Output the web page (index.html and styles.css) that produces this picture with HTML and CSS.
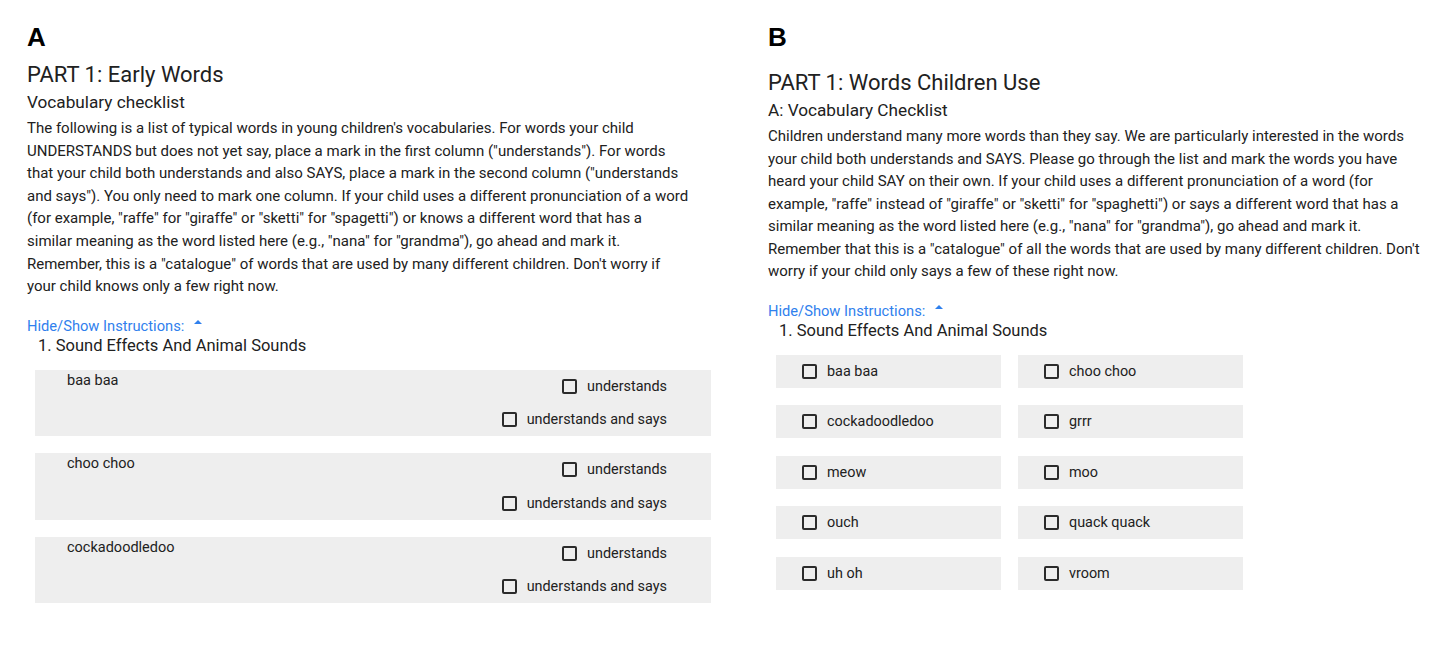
FILE: index.html
```html
<!DOCTYPE html>
<html>
<head>
<meta charset="utf-8">
<link rel="stylesheet" href="styles.css">
</head>
<body>
<div class="page">
  <section class="panel panel-a">
    <div class="letter">A</div>
    <h1 class="title">PART 1: Early Words</h1>
    <h2 class="subtitle">Vocabulary checklist</h2>
    <p class="instructions">The following is a list of typical words in young children's vocabularies. For words your child UNDERSTANDS but does not yet say, place a mark in the first column ("understands"). For words that your child both understands and also SAYS, place a mark in the second column ("understands and says"). You only need to mark one column. If your child uses a different pronunciation of a word (for example, "raffe" for "giraffe" or "sketti" for "spagetti") or knows a different word that has a similar meaning as the word listed here (e.g., "nana" for "grandma"), go ahead and mark it. Remember, this is a "catalogue" of words that are used by many different children. Don't worry if your child knows only a few right now.</p>
    <div class="toggle toggle-a">Hide/Show Instructions: <svg class="caret" width="12" height="8" viewBox="0 0 12 8"><path d="M2 6 L6 2 L10 6 Z" fill="currentColor"/></svg></div>
    <div class="section-title">1. Sound Effects And Animal Sounds</div>
    <div class="rows">
      <div class="row">
        <div class="word">baa baa</div>
        <div class="opts">
          <label class="opt"><span class="box"></span>understands</label>
          <label class="opt"><span class="box"></span>understands and says</label>
        </div>
      </div>
      <div class="row">
        <div class="word">choo choo</div>
        <div class="opts">
          <label class="opt"><span class="box"></span>understands</label>
          <label class="opt"><span class="box"></span>understands and says</label>
        </div>
      </div>
      <div class="row">
        <div class="word">cockadoodledoo</div>
        <div class="opts">
          <label class="opt"><span class="box"></span>understands</label>
          <label class="opt"><span class="box"></span>understands and says</label>
        </div>
      </div>
    </div>
  </section>
  <section class="panel panel-b">
    <div class="letter">B</div>
    <h1 class="title title-b">PART 1: Words Children Use</h1>
    <h2 class="subtitle">A: Vocabulary Checklist</h2>
    <p class="instructions instructions-b">Children understand many more words than they say. We are particularly interested in the words your child both understands and SAYS. Please go through the list and mark the words you have heard your child SAY on their own. If your child uses a different pronunciation of a word (for example, "raffe" instead of "giraffe" or "sketti" for "spaghetti") or says a different word that has a similar meaning as the word listed here (e.g., "nana" for "grandma"), go ahead and mark it. Remember that this is a "catalogue" of all the words that are used by many different children. Don't worry if your child only says a few of these right now.</p>
    <div class="toggle toggle-b">Hide/Show Instructions: <svg class="caret" width="12" height="8" viewBox="0 0 12 8"><path d="M2 6 L6 2 L10 6 Z" fill="currentColor"/></svg></div>
    <div class="section-title">1. Sound Effects And Animal Sounds</div>
    <div class="grid">
      <label class="cell"><span class="box"></span>baa baa</label>
      <label class="cell"><span class="box"></span>choo choo</label>
      <label class="cell"><span class="box"></span>cockadoodledoo</label>
      <label class="cell"><span class="box"></span>grrr</label>
      <label class="cell"><span class="box"></span>meow</label>
      <label class="cell"><span class="box"></span>moo</label>
      <label class="cell"><span class="box"></span>ouch</label>
      <label class="cell"><span class="box"></span>quack quack</label>
      <label class="cell"><span class="box"></span>uh oh</label>
      <label class="cell"><span class="box"></span>vroom</label>
    </div>
  </section>
</div>
</body>
</html>
```

FILE: styles.css
```css
html, body {
  margin: 0;
  padding: 0;
  background: #ffffff;
}
body {
  font-family: Roboto, "Noto Sans", Arial, sans-serif;
  color: #212121;
}
.page {
  display: flex;
  align-items: flex-start;
}
.panel-a {
  width: 684px;
  margin-left: 27px;
  padding-top: 22px;
}
.panel-b {
  width: 660px;
  margin-left: 57px;
  padding-top: 22px;
}
.letter {
  font-family: "Liberation Sans", Arial, sans-serif;
  font-weight: bold;
  font-size: 26px;
  line-height: 30px;
  color: #000;
}
.title {
  margin: 8px 0 0 0;
  font-size: 22px;
  font-weight: 400;
  line-height: 30px;
}
.title-b {
  margin-top: 16px;
}
.subtitle {
  margin: 0;
  font-size: 17.2px;
  font-weight: 400;
  line-height: 25px;
}
.instructions {
  margin: 0;
  padding-top: 2px;
  font-size: 15px;
  line-height: 22.6px;
  width: 663px;
}
.instructions-b {
  width: 660px;
  line-height: 22.5px;
  padding-top: 2px;
}
.toggle {
  color: #2f80ed;
  font-size: 14.7px;
  line-height: 20px;
  display: flex;
  align-items: center;
}
.toggle-a {
  margin-top: 18px;
}
.toggle-b {
  margin-top: 18px;
}
.caret {
  margin-left: 8px;
  margin-top: -7px;
}
.section-title {
  font-size: 16.5px;
  line-height: 20px;
  padding-left: 11px;
}
.rows {
  margin-top: 14px;
  margin-left: 8px;
  display: flex;
  flex-direction: column;
  gap: 17px;
}
.row {
  background: #eeeeee;
  height: 66.5px;
  display: flex;
  justify-content: space-between;
  align-items: flex-start;
  padding: 0 44px 0 32px;
}
.word {
  font-size: 14.5px;
  line-height: 18px;
  padding-top: 2px;
}
.opts {
  display: flex;
  flex-direction: column;
  align-items: flex-end;
}
.opt {
  display: flex;
  align-items: center;
  height: 33.3px;
  font-size: 14.4px;
}
.box {
  display: inline-block;
  width: 11px;
  height: 11px;
  border: 2px solid #2b2b2b;
  border-radius: 2px;
  margin-right: 10px;
  flex: none;
}
.grid {
  margin-top: 14px;
  margin-left: 8px;
  display: grid;
  grid-template-columns: 225px 225px;
  column-gap: 17px;
  row-gap: 17.5px;
}
.cell {
  background: #eeeeee;
  height: 33px;
  display: flex;
  align-items: center;
  padding-left: 26px;
  font-size: 14.4px;
}
```
